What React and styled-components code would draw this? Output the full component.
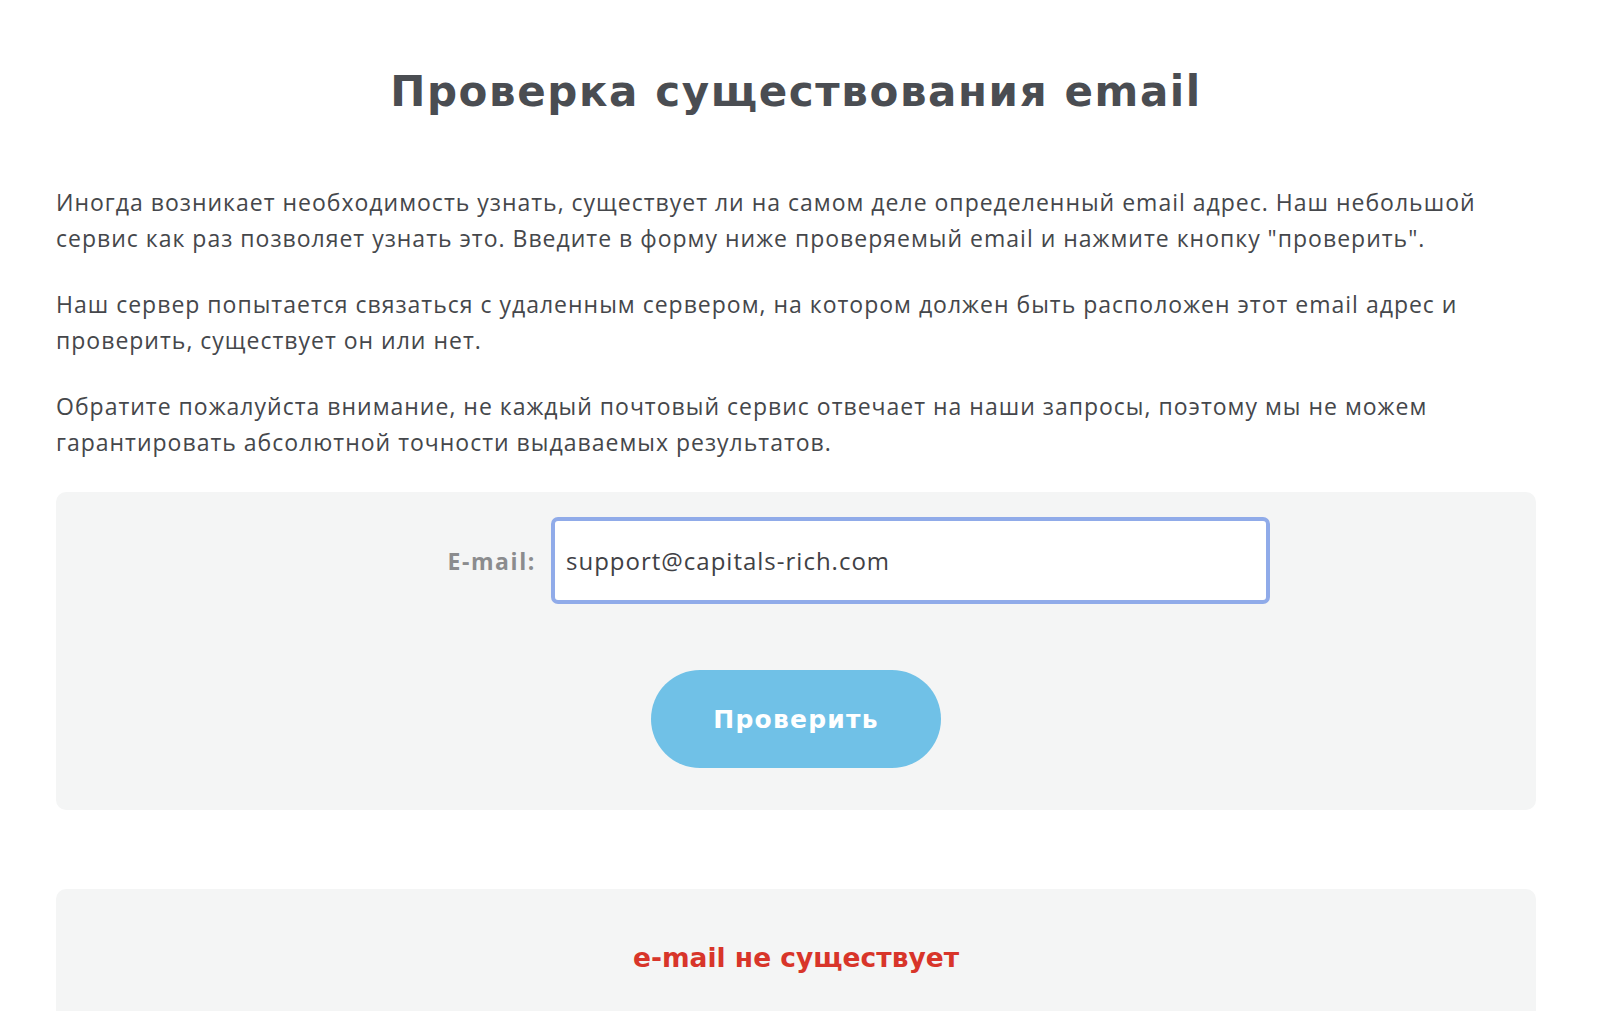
import React from 'react'
import styled, { createGlobalStyle } from 'styled-components'

const GlobalStyle = createGlobalStyle`
  html, body {
    margin: 0;
    padding: 0;
    background: #ffffff;
  }
  body {
    font-family: "Open Sans", Lato, sans-serif;
    color: #4a4c50;
  }
`

const Page = styled.div`
  width: 1480px;
  padding: 66px 0 0 56px;
  box-sizing: content-box;
`

const Title = styled.h1`
  margin: 0;
  text-align: center;
  font-family: "DejaVu Sans", Inter, sans-serif;
  font-weight: 700;
  font-size: 42px;
  line-height: 52px;
  letter-spacing: 1.6px;
  color: #4a4d52;
`

const Intro = styled.div`
  margin-top: 66px;
  display: flex;
  flex-direction: column;
  gap: 30px;
`

const Paragraph = styled.p`
  margin: 0;
  font-size: 23px;
  font-weight: 500;
  line-height: 36px;
  letter-spacing: 1px;
  color: #45474b;
`

const Panel = styled.div`
  background: #f4f5f5;
  border-radius: 10px;
  margin-top: ${p => p.$top}px;
  padding: ${p => p.$pad};
  display: flex;
  flex-direction: column;
  align-items: center;
`

const Field = styled.label`
  align-self: stretch;
  display: grid;
  grid-template-columns: 480px 719px;
  column-gap: 15px;
  align-items: center;
`

const FieldName = styled.span`
  text-align: right;
  font-size: 23px;
  font-weight: 700;
  letter-spacing: 1.6px;
  color: #8b8c8e;
`

const Input = styled.input`
  box-sizing: border-box;
  height: 87px;
  width: 719px;
  border: 4px solid #90abe9;
  border-radius: 7px;
  background: #fff;
  padding: 0 11px;
  font-family: "Open Sans", Lato, sans-serif;
  font-size: 24px;
  font-weight: 500;
  letter-spacing: 1px;
  color: #3f4145;
  outline: none;
`

const Button = styled.button`
  margin-top: 66px;
  width: 290px;
  height: 98px;
  border: 0;
  border-radius: 49px;
  background: #70c1e7;
  color: #fff;
  font-family: "DejaVu Sans", Inter, sans-serif;
  font-weight: 700;
  font-size: 25px;
  letter-spacing: 1.2px;
  cursor: pointer;
`

const Result = styled.div`
  font-family: "DejaVu Sans", Inter, sans-serif;
  font-weight: 700;
  font-size: 26.5px;
  line-height: 34px;
  color: #d8352a;
`

export default function App() {
  return (
    <Page>
      <GlobalStyle />
      <Title>Проверка существования email</Title>
      <Intro>
        <Paragraph>
          Иногда возникает необходимость узнать, существует ли на самом деле определенный email адрес. Наш небольшой
          сервис как раз позволяет узнать это. Введите в форму ниже проверяемый email и нажмите кнопку "проверить".
        </Paragraph>
        <Paragraph>
          Наш сервер попытается связаться с удаленным сервером, на котором должен быть расположен этот email адрес и
          проверить, существует он или нет.
        </Paragraph>
        <Paragraph>
          Обратите пожалуйста внимание, не каждый почтовый сервис отвечает на наши запросы, поэтому мы не можем
          гарантировать абсолютной точности выдаваемых результатов.
        </Paragraph>
      </Intro>
      <Panel $top={32} $pad="25px 0 42px">
        <Field>
          <FieldName>E-mail:</FieldName>
          <Input type="text" defaultValue="support@capitals-rich.com" />
        </Field>
        <Button>Проверить</Button>
      </Panel>
      <Panel $top={79} $pad="52px 0 60px">
        <Result>e-mail не существует</Result>
      </Panel>
    </Page>
  )
}
